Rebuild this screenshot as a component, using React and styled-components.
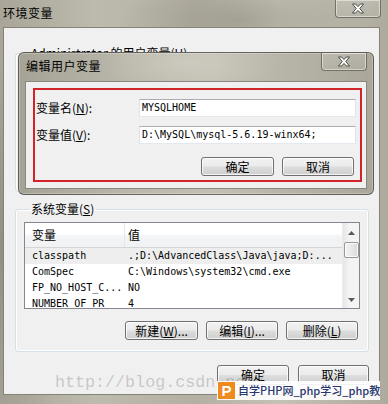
import React from "react";
import styled, { createGlobalStyle } from "styled-components";

const GlobalStyle = createGlobalStyle`
  * { box-sizing: border-box; }
  body {
    margin: 0;
    width: 388px;
    height: 404px;
    overflow: hidden;
    font-family: "Noto Sans CJK SC", "Noto Sans", sans-serif;
  }
`;

const cjk = `"Noto Sans CJK SC", "Noto Sans", sans-serif`;
const mono = `"DejaVu Sans Mono", "Liberation Mono", monospace`;

const Window = styled.div`
  position: relative;
  width: 388px;
  height: 404px;
  display: flex;
  flex-direction: column;
  padding: 0 8px 9px 3px;
  background:
    radial-gradient(ellipse 120px 40px at 240px 20px, rgba(120, 118, 105, 0.35), transparent),
    radial-gradient(ellipse 80px 200px at 0px 250px, rgba(100, 98, 88, 0.35), transparent),
    linear-gradient(90deg, #a9a699 0%, #bdbaae 25%, #b3b0a3 50%, #c4c1b5 72%, #aeab9e 100%);
  overflow: hidden;
`;

const TitleBar = styled.div`
  height: 27px;
  display: flex;
  justify-content: space-between;
  align-items: flex-start;
`;

const Title = styled.div`
  font: 12px/16px ${cjk};
  letter-spacing: 0.5px;
  color: #000;
  padding-top: 5px;
  padding-left: ${p => p.$left || 0}px;
`;

const CloseBtn = styled.div`
  width: 46px;
  height: 18px;
  margin-right: ${p => p.$mr || 0}px;
  border: 1px solid rgba(55, 52, 45, 0.55);
  border-top: none;
  border-radius: 0 0 4px 4px;
  background: linear-gradient(rgba(255, 255, 255, 0.15), rgba(255, 255, 255, 0.05));
  box-shadow: inset 0 0 0 1px rgba(255, 255, 255, 0.45);
  display: flex;
  align-items: center;
  justify-content: center;
`;

const XIcon = () => (
  <svg width="14" height="11" viewBox="0 0 14 11">
    <path
      d="M1.5 1 H4.6 L7 3.6 L9.4 1 H12.5 L8.8 5.5 L12.5 10 H9.4 L7 7.4 L4.6 10 H1.5 L5.2 5.5 Z"
      fill="#fff"
      stroke="#4a4a44"
      strokeWidth="1"
      strokeLinejoin="round"
    />
  </svg>
);

const Client = styled.div`
  flex: 1;
  background: #f0f0f0;
  border: 1px solid #858378;
  padding: 17px 10px 9px 11px;
  display: flex;
  flex-direction: column;
`;

const Group = styled.fieldset`
  margin: 0;
  border: 1px solid #d5dfe5;
  border-radius: 3px;
  box-shadow: inset 0 0 0 1px #fff;
  padding: 5px 8px 11px 8px;
  height: ${p => (p.$h ? `${p.$h}px` : "auto")};
  margin-bottom: ${p => p.$mb || 0}px;
`;

const Legend = styled.legend`
  font: 12px/16px ${cjk};
  color: #000;
  padding: 0 2px;
  margin-left: 5px;
`;

const List = styled.div`
  height: 87px;
  border: 1px solid #828790;
  background: #fff;
  display: flex;
`;

const ListMain = styled.div`
  flex: 1;
  display: flex;
  flex-direction: column;
  overflow: hidden;
`;

const HeaderRow = styled.div`
  height: 25px;
  display: grid;
  grid-template-columns: 99px 1fr;
  background: linear-gradient(#fff 0%, #fff 45%, #f3f4f6 55%, #f1f2f4 100%);
  border-bottom: 1px solid #d5d5d5;
  flex-shrink: 0;
`;

const HeaderCell = styled.div`
  font: 12px/24px ${cjk};
  color: #000;
  padding-left: ${p => p.$pl}px;
  border-left: ${p => (p.$divider ? "1px solid #e3e6ea" : "none")};
`;

const Row = styled.div`
  height: 16px;
  flex-shrink: 0;
  display: grid;
  grid-template-columns: 99px 1fr;
  background: ${p => (p.$selected ? "#eeeeee" : "transparent")};
`;

const Cell = styled.div`
  font: 10px/16px ${mono};
  color: #000;
  padding-left: ${p => p.$pl}px;
  white-space: nowrap;
  overflow: hidden;
`;

const ScrollBar = styled.div`
  width: 17px;
  display: flex;
  flex-direction: column;
  align-items: center;
  background: linear-gradient(90deg, #e6e6e6, #f4f4f4 40%, #f4f4f4);
  border-left: 1px solid #ececec;
`;

const Arrow = styled.div`
  height: ${p => p.$h}px;
  display: flex;
  align-items: center;
  justify-content: center;
`;

const Thumb = styled.div`
  width: 15px;
  height: 16px;
  border: 1px solid #979797;
  border-radius: 2px;
  background: linear-gradient(90deg, #f3f3f3, #e8e8e8 50%, #d9d9d9);
  box-shadow: inset 0 0 0 1px rgba(255, 255, 255, 0.8);
`;

const Track = styled.div`
  flex: 1;
`;

const ButtonRow = styled.div`
  display: flex;
  justify-content: flex-end;
  gap: ${p => p.$gap || 8}px;
  margin-top: ${p => p.$mt || 0}px;
  padding-right: ${p => p.$pr || 0}px;
`;

const Button = styled.button`
  width: ${p => p.$w}px;
  height: ${p => p.$h || 19}px;
  padding: 0;
  border: 1px solid #707070;
  border-radius: 3px;
  background: linear-gradient(#f2f2f2 0%, #ebebeb 48%, #dddddd 52%, #cfcfcf 100%);
  box-shadow: inset 0 0 0 1px rgba(255, 255, 255, 0.75);
  font: 12px/16px ${cjk};
  color: #000;
  white-space: nowrap;
`;

const Dialog = styled.div`
  position: absolute;
  left: 18px;
  top: 52px;
  width: 356px;
  height: 143px;
  border: 1px solid rgba(45, 43, 38, 0.6);
  border-radius: 6px;
  padding: 0 6px 5px 6px;
  display: flex;
  flex-direction: column;
  background:
    radial-gradient(ellipse 90px 30px at 170px 10px, rgba(215, 212, 202, 0.55), transparent),
    linear-gradient(90deg, #a5a296 0%, #b9b6aa 30%, #c2bfb3 55%, #b4b1a5 80%, #aaa79a 100%);
  box-shadow: inset 0 0 0 1px rgba(255, 255, 255, 0.25);
`;

const DialogTitleBar = styled.div`
  height: 28px;
  display: flex;
  justify-content: space-between;
  align-items: flex-start;
`;

const DialogClient = styled.div`
  flex: 1;
  background: #f0f0f0;
  border: 1px solid #8a887e;
  padding: 6px 4px 6px 7px;
`;

const RedBox = styled.div`
  border: 2px solid #d2232a;
  padding: 9px 4px 4px 0;
  display: flex;
  flex-direction: column;
`;

const FieldRow = styled.div`
  height: 18px;
  display: flex;
  align-items: center;
  margin-top: ${p => p.$mt || 0}px;
`;

const FieldLabel = styled.div`
  width: 104px;
  padding-left: 1px;
  font: 12px/16px ${cjk};
  color: #000;
`;

const Input = styled.div`
  flex: 1;
  height: 18px;
  background: #fff;
  border: 1px solid #e2e3ea;
  border-top-color: #abadb3;
  border-bottom-color: #e3e9ef;
  padding-left: 2px;
  font: 10px/16px ${mono};
  color: #000;
  white-space: nowrap;
`;

const Watermark = styled.div`
  position: absolute;
  left: 55px;
  top: 373px;
  font: 16.7px/20px "Liberation Mono", monospace;
  color: rgba(130, 130, 130, 0.38);
  white-space: nowrap;
  pointer-events: none;
`;

const SiteBadge = styled.div`
  position: absolute;
  left: 217px;
  top: 381px;
  width: 163px;
  height: 19px;
  background: rgba(255, 255, 255, 0.9);
  display: flex;
  align-items: center;
  gap: 3px;
  padding-left: 1px;
  overflow: hidden;
`;

const BadgeLogo = styled.div`
  width: 17px;
  height: 17px;
  flex-shrink: 0;
  background: #f08a1c;
  color: #fff;
  font: bold 15px/17px "Liberation Sans", sans-serif;
  text-align: center;
`;

const BadgeText = styled.div`
  font: 500 11px/17px ${cjk};
  color: #27366f;
  white-space: nowrap;
`;

const ArrowIcon = ({ up }) => (
  <svg width="7" height="4" viewBox="0 0 7 4">
    <path d={up ? "M0 4 L3.5 0 L7 4 Z" : "M0 0 L3.5 4 L7 0 Z"} fill="#5a5a5a" />
  </svg>
);

const rows = [
  { name: "classpath", value: ".;D:\\AdvancedClass\\Java\\java;D:...", selected: true },
  { name: "ComSpec", value: "C:\\Windows\\system32\\cmd.exe" },
  { name: "FP_NO_HOST_C...", value: "NO" },
  { name: "NUMBER_OF_PR", value: "4" },
];

export default function App() {
  return (
    <>
      <GlobalStyle />
      <Window>
        <TitleBar>
          <Title>环境变量</Title>
          <CloseBtn $mr={-1}>
            <XIcon />
          </CloseBtn>
        </TitleBar>
        <Client>
          <Group $h={147} $mb={9}>
            <Legend>Administrator 的用户变量(<u>U</u>)</Legend>
          </Group>
          <Group>
            <Legend>系统变量(<u>S</u>)</Legend>
            <List>
              <ListMain>
                <HeaderRow>
                  <HeaderCell $pl={7}>变量</HeaderCell>
                  <HeaderCell $pl={3} $divider>值</HeaderCell>
                </HeaderRow>
                {rows.map(r => (
                  <Row key={r.name} $selected={r.selected}>
                    <Cell $pl={7}>{r.name}</Cell>
                    <Cell $pl={4}>{r.value}</Cell>
                  </Row>
                ))}
              </ListMain>
              <ScrollBar>
                <Arrow $h={19}>
                  <ArrowIcon up />
                </Arrow>
                <Thumb />
                <Track />
                <Arrow $h={17}>
                  <ArrowIcon />
                </Arrow>
              </ScrollBar>
            </List>
            <ButtonRow $mt={12} $pr={2}>
              <Button $w={73}>新建(<u>W</u>)...</Button>
              <Button $w={72}>编辑(<u>I</u>)...</Button>
              <Button $w={72}>删除(<u>L</u>)</Button>
            </ButtonRow>
          </Group>
          <ButtonRow $mt={13} $gap={9}>
            <Button $w={72} $h={20}>确定</Button>
            <Button $w={71} $h={20}>取消</Button>
          </ButtonRow>
        </Client>

        <Dialog>
          <DialogTitleBar>
            <Title $left={1}>编辑用户变量</Title>
            <CloseBtn>
              <XIcon />
            </CloseBtn>
          </DialogTitleBar>
          <DialogClient>
            <RedBox>
              <FieldRow>
                <FieldLabel>变量名(<u>N</u>):</FieldLabel>
                <Input>MYSQLHOME</Input>
              </FieldRow>
              <FieldRow $mt={9}>
                <FieldLabel>变量值(<u>V</u>):</FieldLabel>
                <Input>D:\MySQL\mysql-5.6.19-winx64;</Input>
              </FieldRow>
              <ButtonRow $mt={13} $pr={2}>
                <Button $w={73}>确定</Button>
                <Button $w={72}>取消</Button>
              </ButtonRow>
            </RedBox>
          </DialogClient>
        </Dialog>

        <Watermark>http://blog.csdn.net/</Watermark>
        <SiteBadge>
          <BadgeLogo>P</BadgeLogo>
          <BadgeText>自学PHP网_php学习_php教程</BadgeText>
        </SiteBadge>
      </Window>
    </>
  );
}
